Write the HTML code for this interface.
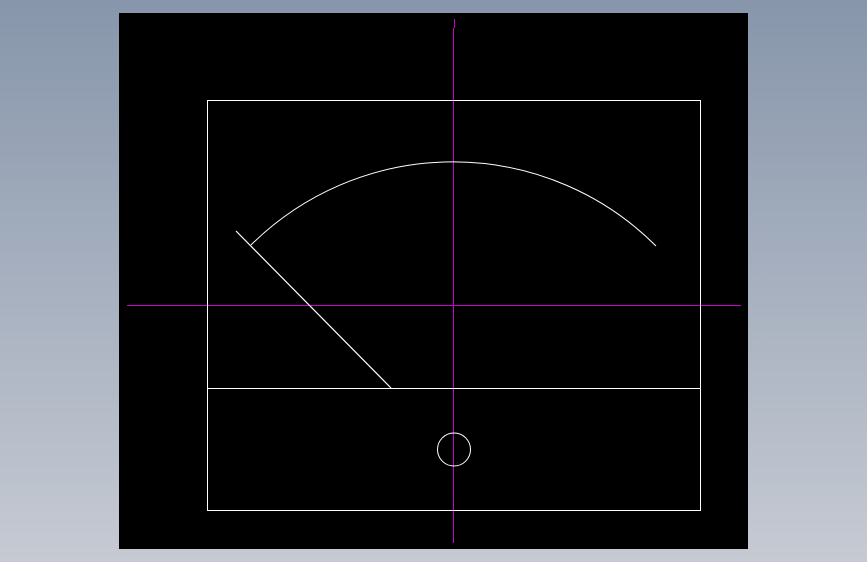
<!DOCTYPE html>
<html><head><meta charset="utf-8"><style>
html,body{margin:0;padding:0;width:867px;height:562px;overflow:hidden;background:linear-gradient(#8796ab,#c6cad3);}
svg{position:absolute;left:0;top:0}
</style></head><body>
<svg width="867" height="562" viewBox="0 0 867 562">
<rect x="119" y="13" width="629" height="536" fill="#000"/>
<g stroke="#cc00cc" stroke-width="1" fill="none" shape-rendering="crispEdges">
<line x1="453.5" y1="28" x2="453.5" y2="543"/>
<line x1="127" y1="305.5" x2="741" y2="305.5"/>
<line x1="454.5" y1="19" x2="454.5" y2="28" stroke-width="1.2"/>
</g>
<g stroke="#fff" fill="none" stroke-width="1.2">
<rect x="207.5" y="100.5" width="493" height="410" shape-rendering="crispEdges"/>
<line x1="207" y1="388.5" x2="700" y2="388.5" shape-rendering="crispEdges"/>
<line x1="236" y1="231" x2="391" y2="388"/>
<path d="M251 245 A287 287 0 0 1 656 246" stroke-width="1"/>
<circle cx="454" cy="449.5" r="16.5" stroke-width="1"/>
</g>
</svg>
</body></html>
